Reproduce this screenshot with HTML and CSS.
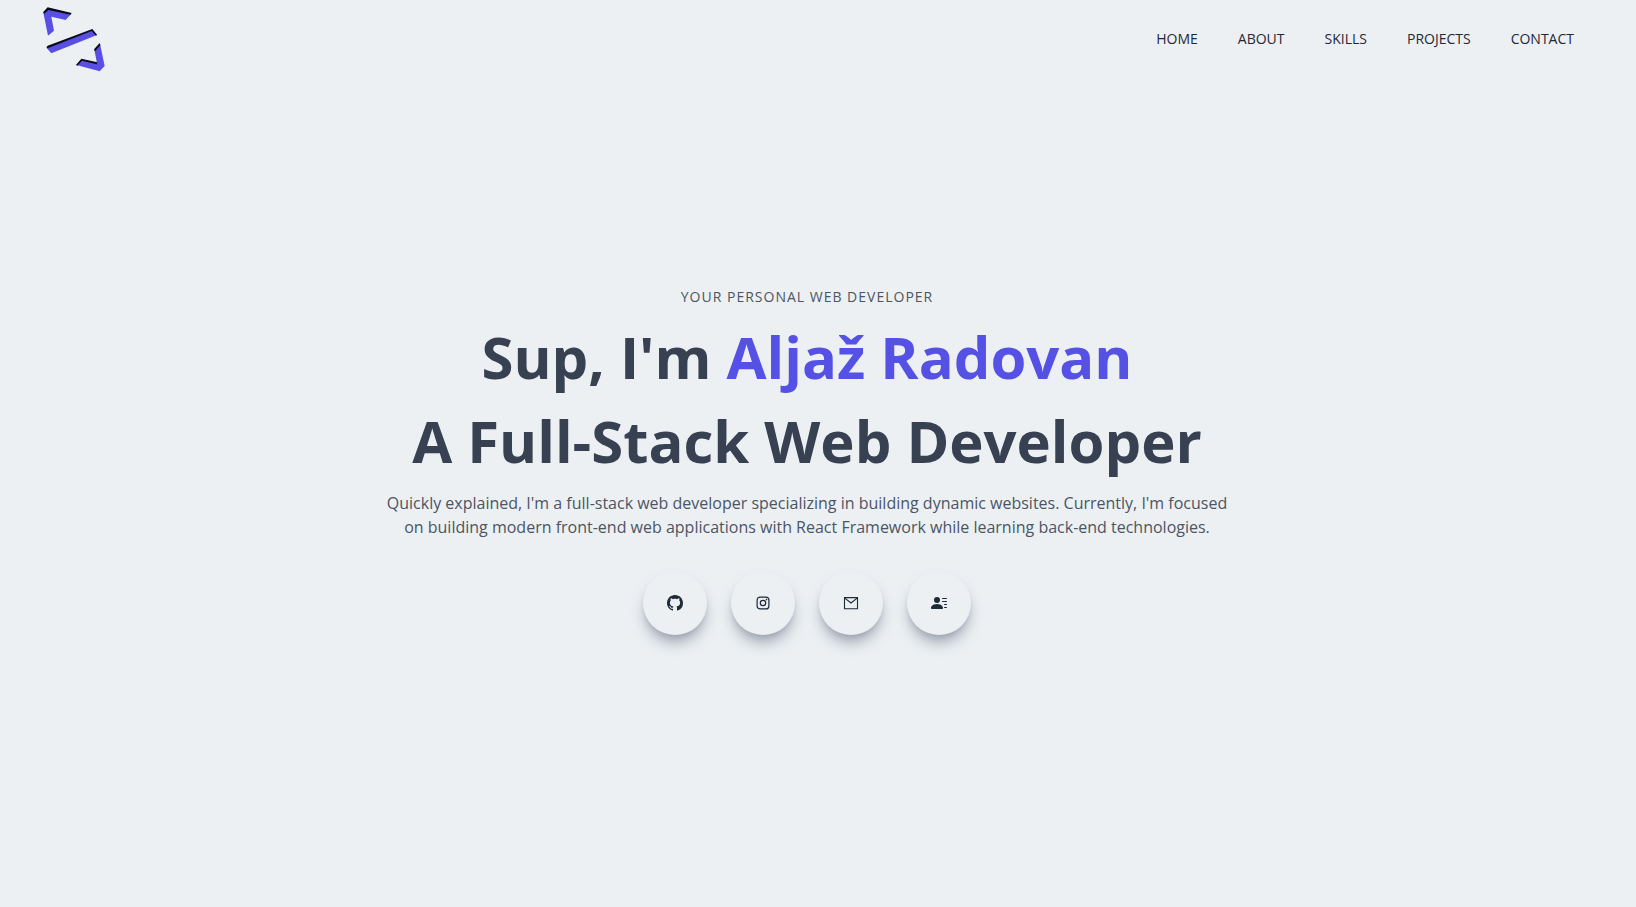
FILE: index.html
```html
<!DOCTYPE html>
<html lang="en">
<head>
<meta charset="utf-8">
<meta name="viewport" content="width=device-width, initial-scale=1">
<title>Aljaž Radovan</title>
<link rel="stylesheet" href="styles.css">
</head>
<body>
<header class="header">
  <a class="logo" href="#" aria-label="Home page">
    <svg width="90" height="80" viewBox="0 0 270 240" aria-hidden="true">
      <g fill="#5a4fe3">
        <path d="M40 38 54 27 124 41 107 60 64 50 72 92 54 107Z"/>
        <path d="M50 144 185 91 201 105 64 160Z"/>
        <path d="M210 131 224 198 209 214 139 195 155 178 201 190 193 149Z"/>
      </g>
      <g fill="#0b0a1c">
        <path d="M39 37 53 22 125 39 121 44 55 30 43 41Z"/>
        <path d="M49 142 53 137 187 87 201 104 198 107 185 93 53 145Z"/>
        <path d="M192 148 209 129 211 136 195 154ZM138 195 154 176 202 187 200 193 156 182 142 197Z"/>
      </g>
    </svg>
  </a>
  <nav class="nav">
    <a href="#home">HOME</a>
    <a href="#about">ABOUT</a>
    <a href="#skills">SKILLS</a>
    <a href="#projects">PROJECTS</a>
    <a href="#contact">CONTACT</a>
  </nav>
</header>
<main class="hero">
  <p class="eyebrow">YOUR PERSONAL WEB DEVELOPER</p>
  <h1 class="title">Sup, I'm <span class="name">Aljaž Radovan</span></h1>
  <h1 class="title">A Full-Stack Web Developer</h1>
  <p class="intro">Quickly explained, I'm a full-stack web developer specializing in building dynamic websites. Currently, I'm focused on building modern front-end web applications with React Framework while learning back-end technologies.</p>
  <div class="links">
    <a class="circle" href="#github" aria-label="GitHub">
      <svg width="16" height="16" viewBox="0 0 16 16" fill="currentColor"><path d="M8 0C3.58 0 0 3.58 0 8c0 3.54 2.29 6.53 5.47 7.59.4.07.55-.17.55-.38 0-.19-.01-.82-.01-1.49-2.01.37-2.53-.49-2.69-.94-.09-.23-.48-.94-.82-1.13-.28-.15-.68-.52-.01-.53.63-.01 1.08.58 1.23.82.72 1.21 1.87.87 2.33.66.07-.52.28-.87.51-1.07-1.78-.2-3.64-.89-3.64-3.95 0-.87.31-1.59.82-2.15-.08-.2-.36-1.02.08-2.12 0 0 .67-.21 2.2.82.64-.18 1.32-.27 2-.27s1.36.09 2 .27c1.53-1.04 2.2-.82 2.2-.82.44 1.1.16 1.92.08 2.12.51.56.82 1.27.82 2.15 0 3.07-1.87 3.75-3.65 3.95.29.25.54.73.54 1.48 0 1.07-.01 1.93-.01 2.2 0 .21.15.46.55.38A8.01 8.01 0 0 0 16 8c0-4.42-3.58-8-8-8z"/></svg>
    </a>
    <a class="circle" href="#instagram" aria-label="Instagram">
      <svg width="16" height="16" viewBox="0 0 16 16" fill="none" stroke="currentColor" stroke-width="1.2"><rect x="2.1" y="2.1" width="11.8" height="11.8" rx="3"/><circle cx="8" cy="8" r="2.7"/><circle cx="11.5" cy="4.6" r=".8" fill="currentColor" stroke="none"/></svg>
    </a>
    <a class="circle" href="#mail" aria-label="Email">
      <svg width="16" height="16" viewBox="0 0 16 16" fill="none" stroke="currentColor" stroke-width="1.1"><path d="M1.5 2.6h13v11.200h-13zM1.800 3.100 8 8l6.200-4.900"/></svg>
    </a>
    <a class="circle" href="#resume" aria-label="Resume">
      <svg width="16" height="16" viewBox="0 0 16 16" fill="currentColor"><path d="M6 8a3 3 0 1 0 0-6 3 3 0 0 0 0 6zm-5 6s-1 0-1-1 1-4 6-4 6 3 6 4-1 1-1 1zM11 3.500a.5.5 0 0 1 .5-.5h4a.5.5 0 0 1 0 1h-4a.5.5 0 0 1-.5-.5zm.5 2.500a.5.5 0 0 0 0 1h4a.5.5 0 0 0 0-1zm2 3a.5.5 0 0 0 0 1h2a.5.5 0 0 0 0-1zm0 3a.5.5 0 0 0 0 1h2a.5.5 0 0 0 0-1z"/></svg>
    </a>
  </div>
</main>
</body>
</html>
```
FILE: styles.css
```css
* {
  box-sizing: border-box;
}

body {
  margin: 0;
  min-height: 100vh;
  display: flex;
  flex-direction: column;
  background: #ecf0f3;
  color: #1f2937;
  font-family: "Open Sans", "Noto Sans", sans-serif;
}

a {
  color: inherit;
  text-decoration: none;
}

.header {
  display: flex;
  justify-content: space-between;
  align-items: center;
  padding: 0 62px 0 30px;
}

.logo svg {
  display: block;
}

.nav {
  display: flex;
  gap: 40px;
  padding-bottom: 2px;
  font-size: 14px;
  line-height: 20px;
}

.hero {
  flex: 1;
  display: flex;
  flex-direction: column;
  align-items: center;
  justify-content: center;
  padding: 0 22px 42px 0;
  text-align: center;
}

.eyebrow {
  margin: 0;
  padding-bottom: 8px;
  font-size: 14px;
  line-height: 20px;
  letter-spacing: 1px;
  color: #4b5563;
}

.title {
  margin: 0;
  padding: 12px 0;
  font-size: 58px;
  line-height: 60px;
  font-weight: 700;
  color: #374151;
}

.name {
  color: #5651e5;
}

.intro {
  max-width: 850px;
  margin: 0;
  padding: 8px 0;
  font-size: 16px;
  line-height: 24px;
  color: #4b5563;
}

.links {
  display: flex;
  gap: 24px;
  padding: 24px 0;
}

.circle {
  display: flex;
  align-items: center;
  justify-content: center;
  width: 64px;
  height: 64px;
  border-radius: 50%;
  box-shadow: 0 10px 15px -3px #9ca3af, 0 4px 6px -4px #9ca3af;
  background: #ecf0f3;
}
```
